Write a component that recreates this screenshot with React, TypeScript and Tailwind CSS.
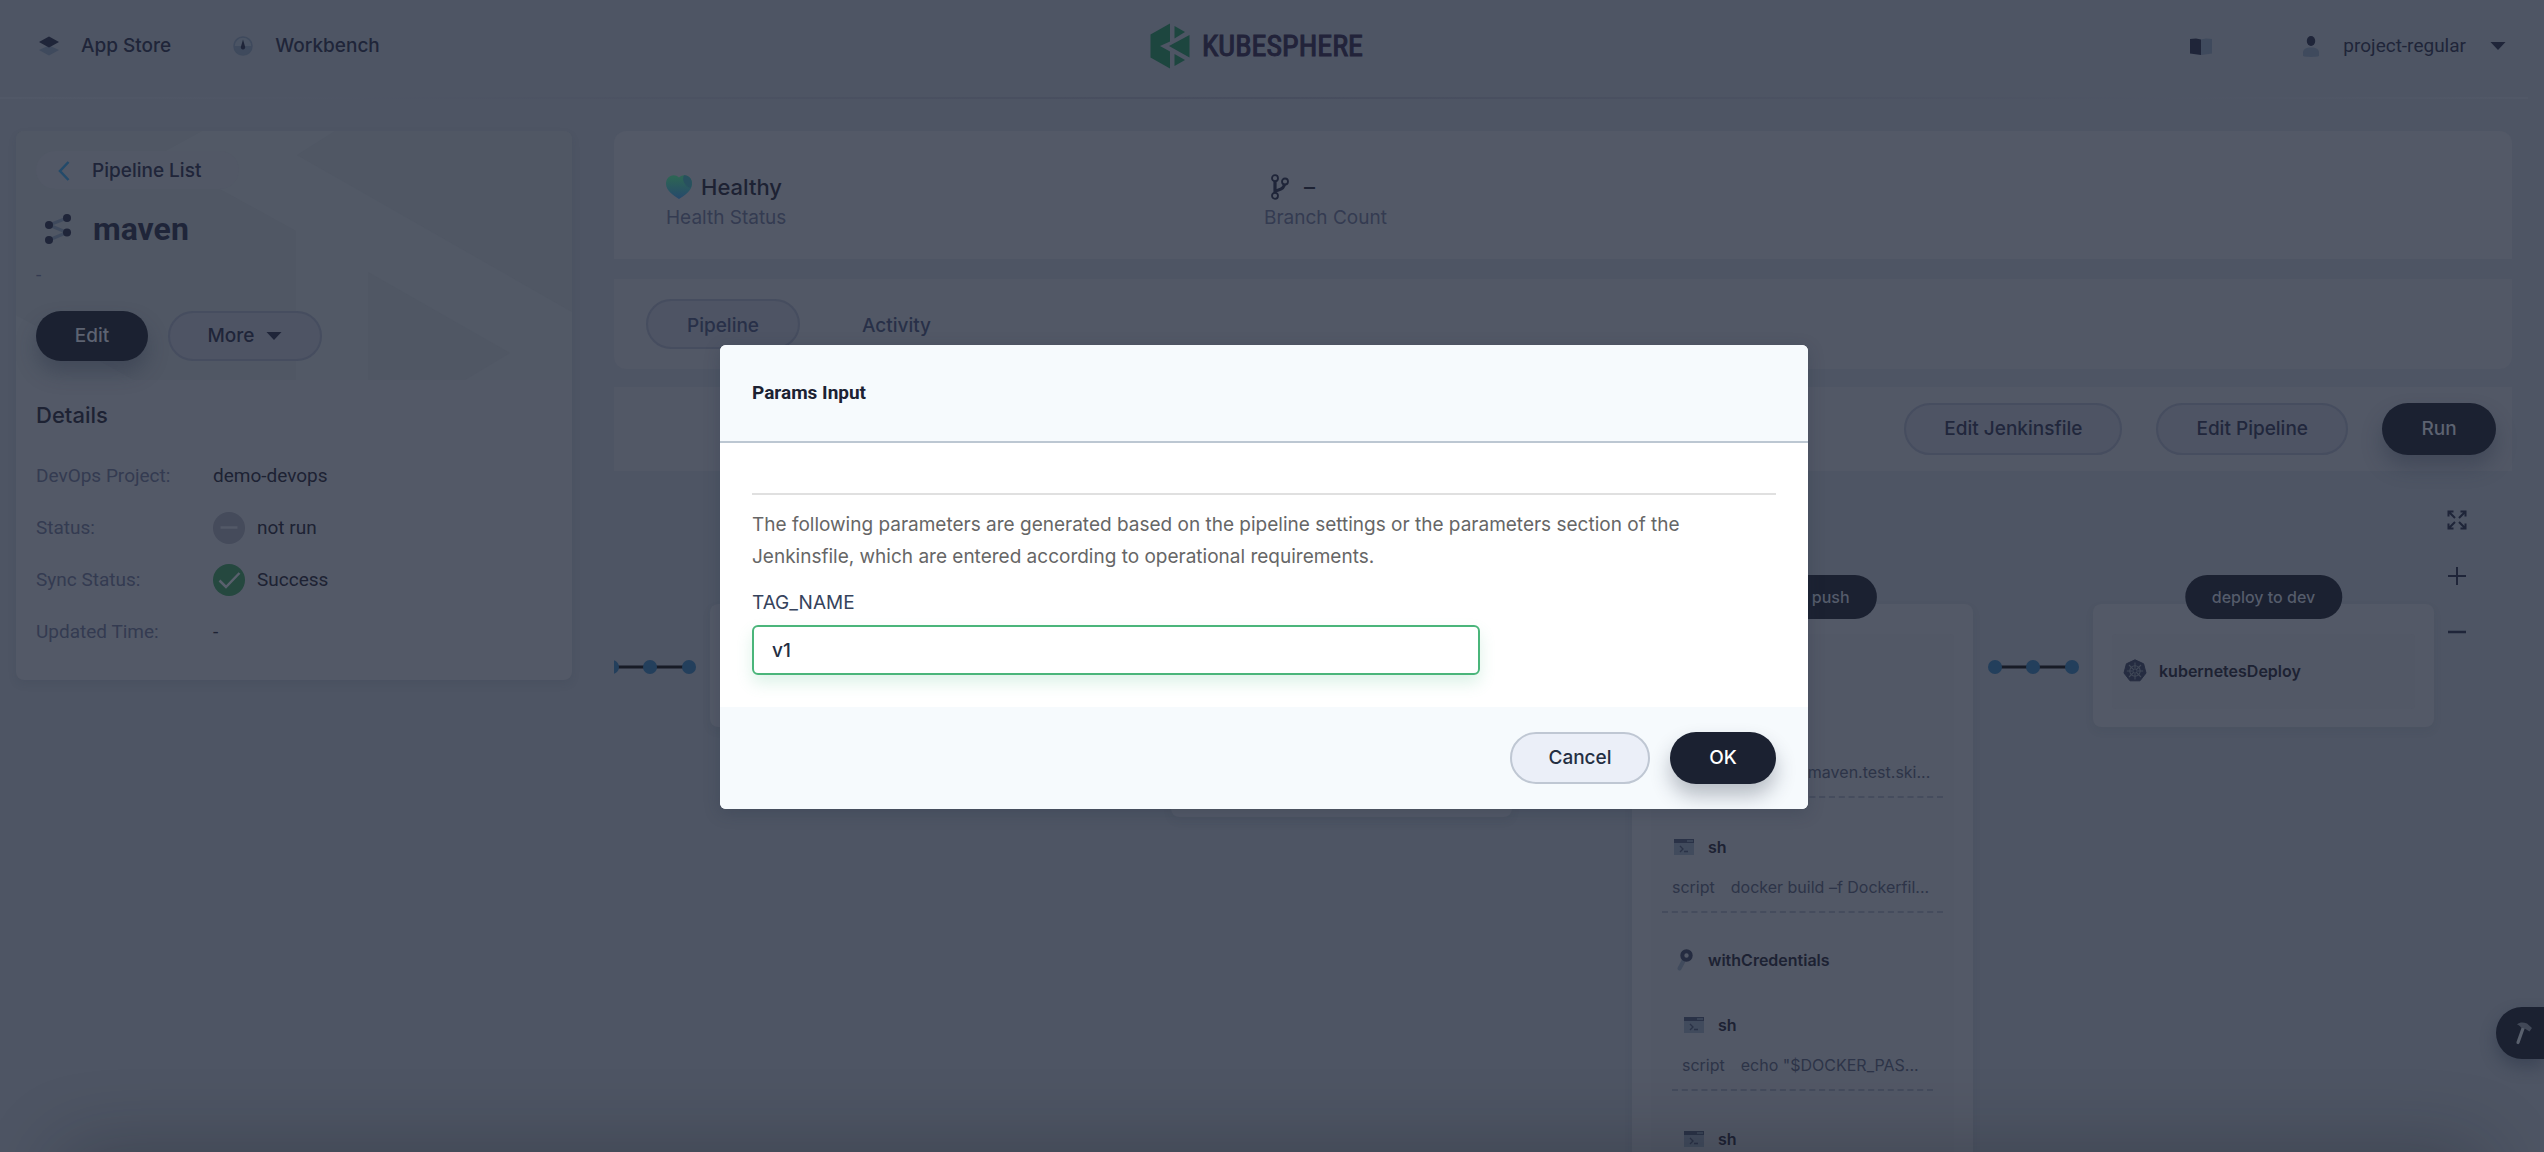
import React from "react";

function LayersIcon() {
  return (
    <svg viewBox="0 0 20 20" className="size-5" aria-hidden="true">
      <path d="M10 9.500 L20 14 L10 19.500 L0 14 Z" fill="#3f4a5d" />
      <path d="M10 0.500 L20 6 L10 11.500 L0 6 Z" fill="#1f2539" />
    </svg>
  );
}

function GaugeIcon() {
  return (
    <svg viewBox="0 0 20 20" className="size-5" aria-hidden="true">
      <circle cx="10" cy="10" r="9" fill="#4b5464" stroke="#3f4a5d" strokeWidth="1.500" />
      <path d="M1 10 A9 9 0 0 0 19 10 Z" fill="#3f4a5d" />
      <path d="M10 3.500 L12 10.500 A2.200 2.200 0 1 1 8 10.500 Z" fill="#1f2539" />
    </svg>
  );
}

function BookIcon() {
  return (
    <svg viewBox="0 0 22 17" className="h-[17px] w-[22px]" aria-hidden="true">
      <path d="M0 1 L6 0.500 L11 1.500 L11 17 L0 15.500 Z" fill="#1f2539" />
      <path d="M11 1.500 L16 0.500 L22 1 L22 15.500 L11 17 Z" fill="#3f4a5d" />
    </svg>
  );
}

function UserIcon() {
  return (
    <svg viewBox="0 0 16 21" className="h-[21px] w-4" aria-hidden="true">
      <ellipse cx="8" cy="5" rx="4.200" ry="5" fill="#1f2539" />
      <path d="M0 20 V17 C0 13 3 11.500 8 11.500 C13 11.500 16 13 16 17 V20 C12 21.200 4 21.200 0 20 Z" fill="#3f4a5d" />
    </svg>
  );
}

function Caret() {
  return (
    <svg viewBox="0 0 16 8" className="h-2 w-4" aria-hidden="true">
      <path d="M0.500 0 H15.500 L8 8 Z" fill="#1f2539" />
    </svg>
  );
}

function LogoMark() {
  return (
    <svg viewBox="0 0 40 46" className="h-[46px] w-10" aria-hidden="true">
      <g fill="#1d463f">
        <path d="M20 0.500 V18.500 L10 23 L20 28.500 V45.500 L0.500 34.500 V11.500 Z" />
        <path d="M24.500 3 L35 9 L24.500 15.500 Z" />
        <path d="M24.500 31 L35 37 L24.500 43 Z" />
        <path d="M39.500 12 V34.500 L19 23 Z" />
      </g>
    </svg>
  );
}

function PipelineIcon() {
  return (
    <svg viewBox="0 0 28 32" className="h-8 w-7" aria-hidden="true">
      <path d="M23 5 L5 12 L23 19.500 L5 27" fill="none" stroke="#3f4a5d" strokeWidth="3" />
      <g fill="#1f2539">
        <circle cx="23" cy="5" r="4" />
        <circle cx="5" cy="12" r="4" />
        <circle cx="23" cy="19.500" r="4" />
        <circle cx="5" cy="27" r="4" />
      </g>
    </svg>
  );
}

function HeartIcon() {
  return (
    <svg viewBox="0 0 26 24" className="h-6 w-[26px]" aria-hidden="true">
      <defs>
        <linearGradient id="heart" x1="0" y1="0" x2="0" y2="1">
          <stop offset="0.100" stopColor="#2d6455" />
          <stop offset="0.950" stopColor="#264a6b" />
        </linearGradient>
      </defs>
      <path d="M13 2.500 C10.500 0 7 -0.300 4.500 1 C1 2.800 0 6 0 9 C0 15.500 7 20 13 24 C19 20 26 15.500 26 9 C26 6 25 2.800 21.500 1 C19 -0.300 15.500 0 13 2.500 Z" fill="url(#heart)" />
      <path d="M18 0.300 C16 4 17.500 10 24.500 13 C27 8 26 3 21.500 1 C20.300 0.400 19.200 0.200 18 0.300 Z" fill="#28505f" />
    </svg>
  );
}

function BranchIcon() {
  return (
    <svg viewBox="0 0 20 26" className="h-[26px] w-5" fill="none" stroke="#1f2539" aria-hidden="true">
      <path d="M5 7 V19 M5 18 C6 15 14 17 14.500 10" strokeWidth="3.200" />
      <circle cx="5" cy="4.200" r="3" strokeWidth="1.800" />
      <circle cx="15" cy="7.500" r="3" strokeWidth="1.800" />
      <circle cx="5" cy="21.800" r="3" strokeWidth="1.800" />
    </svg>
  );
}

function TerminalIcon() {
  return (
    <svg viewBox="0 0 24 20" className="h-5 w-6" aria-hidden="true">
      <rect x="2" y="2" width="20" height="16" fill="#414b5d" />
      <rect x="2" y="2" width="20" height="4" fill="#2a3247" />
      <path d="M15 4 H21" stroke="#414b5d" strokeWidth="1.500" />
      <path d="M8 9 L11 12 L8 15 M12 14.500 H16" fill="none" stroke="#2a3247" strokeWidth="1.300" />
    </svg>
  );
}

function KeyIcon() {
  return (
    <svg viewBox="0 0 24 24" className="size-6" fill="none" aria-hidden="true">
      <path d="M12 12 L7.500 20.500" stroke="#414b5d" strokeWidth="4" strokeLinecap="round" />
      <circle cx="14.500" cy="7.500" r="4.200" stroke="#252c41" strokeWidth="4" />
    </svg>
  );
}

function KubernetesIcon() {
  return (
    <svg viewBox="0 0 24 24" className="size-6" aria-hidden="true">
      <path d="M12 0.800 L20.600 4.800 L23 14 L17 21.800 H7 L1 14 L3.400 4.800 Z" fill="#252c41" stroke="#252c41" strokeLinejoin="round" />
      <g fill="none" stroke="#414958" strokeWidth="1.100">
        <circle cx="12" cy="12" r="5.200" />
        <path d="M12 3.500 V20.500 M3.800 12 H20.200 M6 6 L18 18 M18 6 L6 18" />
      </g>
      <circle cx="12" cy="12" r="1.500" fill="#252c41" />
    </svg>
  );
}

function HammerIcon() {
  return (
    <svg viewBox="0 0 22 26" className="h-[26px] w-[22px]" aria-hidden="true">
      <path d="M11.500 7 L6 22.500" stroke="#59606d" strokeWidth="3.200" strokeLinecap="round" />
      <path d="M5 4.500 C8 2 11 2 15 3.500 L20 8 L17.500 11.500 L13.500 9 L9 7.500 C8 6 7 5.200 5 4.500 Z" fill="#414857" />
    </svg>
  );
}

const outlineButton =
  "h-[52px] rounded-full border-2 border-[#464d5f] bg-[#4e5464] px-[38px] font-[Inter,sans-serif] text-[19px] font-medium text-[#21273c]";
const darkButton =
  "rounded-full bg-[#1b2131] font-[Inter,sans-serif] text-[19px] font-medium text-[#5d6371] shadow-[0_12px_20px_rgba(36,46,66,0.35)]";

function Connector() {
  return (
    <svg viewBox="0 0 120 16" className="mt-[55px] h-4 w-[120px] shrink-0" aria-hidden="true">
      <path d="M22 8 H98" stroke="#171b26" strokeWidth="3" />
      <g fill="#233f5c">
        <circle cx="22" cy="8" r="7" />
        <circle cx="60" cy="8" r="7" />
        <circle cx="99" cy="8" r="7" />
      </g>
    </svg>
  );
}

function Step({ icon, name }: { icon: React.ReactNode; name: string }) {
  return (
    <div className="flex h-6 items-center gap-3 text-base font-semibold text-[#1d2233]">
      <span className="flex w-6 justify-center">{icon}</span>
      {name}
    </div>
  );
}

function ShellStep({ value }: { value: string }) {
  return (
    <div className="flex flex-col gap-4 border-b-2 border-dashed border-[#454c5d] px-2.5 pt-[37px] pb-3">
      <Step icon={<TerminalIcon />} name="sh" />
      <div className="flex h-6 items-center gap-4 text-base whitespace-nowrap text-[#2d3448]">
        <span>script</span>
        <span>{value}</span>
      </div>
    </div>
  );
}

function Stage({ name, children }: { name?: string; children?: React.ReactNode }) {
  return (
    <section className="relative w-[341px] shrink-0 rounded-lg bg-[#535967] px-[19px] pt-[30px] pb-[18px] font-[Inter,sans-serif] shadow-[0_4px_8px_rgba(36,46,66,0.08)]">
      {name && (
        <h3 className="absolute -top-[29px] left-1/2 flex h-[44px] -translate-x-1/2 items-center rounded-full bg-[#1b2131] px-[27px] text-base font-medium whitespace-nowrap text-[#555c6b]">
          {name}
        </h3>
      )}
      <div className="min-h-[75px] rounded-sm bg-[#525866] px-[11px] pt-[25px]">{children}</div>
    </section>
  );
}

function DetailRow({ label, children }: { label: string; children: React.ReactNode }) {
  return (
    <div className="flex h-[52px] items-center">
      <dt className="w-[177px] text-[#343b51]">{label}</dt>
      <dd className="flex items-center gap-3 text-[#1d2233]">{children}</dd>
    </div>
  );
}

function ParamsDialog() {
  return (
    <div className="absolute inset-0 flex items-start justify-center pt-[345px] pr-4">
      <form
        role="dialog"
        aria-label="Params Input"
        className="w-[1088px] max-w-full overflow-hidden rounded-md bg-white font-[Inter,sans-serif] text-[19px] shadow-[0_4px_16px_rgba(36,46,66,0.25)]"
        onSubmit={(e) => e.preventDefault()}
      >
        <header className="flex h-[98px] items-center border-b-2 border-[#bcc7d2] bg-[#f6fafd] px-8">
          <h2 className="font-[Roboto,sans-serif] font-bold text-[#1c2233]">Params Input</h2>
        </header>
        <div className="px-8 pt-[50px] pb-8">
          <hr className="border-t-2 border-[#e0e0e0]" />
          <p className="max-w-[960px] pt-[14px] leading-8 text-[#666]">
            The following parameters are generated based on the pipeline settings or the parameters section of the
            Jenkinsfile, which are entered according to operational requirements.
          </p>
          <label htmlFor="tag-name" className="mt-3.5 block leading-8 text-[#36435c]">
            TAG_NAME
          </label>
          <input
            id="tag-name"
            defaultValue="v1"
            className="mt-1.5 block h-[50px] w-[728px] max-w-full rounded-md border-2 border-[#4ab57a] px-[18px] font-medium text-[#242e42] shadow-[0_8px_16px_rgba(85,188,138,0.2)] outline-none"
          />
        </div>
        <footer className="flex h-[102px] items-center justify-end gap-5 bg-[#f6fafd] px-8 font-medium">
          <button type="button" className="h-[52px] w-[140px] rounded-full border-2 border-[#bfc7d3] bg-[#ebeff8] text-[#242e42]">
            Cancel
          </button>
          <button type="submit" className="h-[52px] w-[106px] rounded-full bg-[#1b2131] text-white shadow-[0_12px_20px_rgba(36,46,66,0.3)]">
            OK
          </button>
        </footer>
      </form>
    </div>
  );
}

export default function App() {
  return (
    <div className="relative flex h-screen flex-col overflow-hidden bg-[#4e5564] pr-4 font-[Roboto,sans-serif] text-[19px] text-[#1f2539]">
      <header className="grid h-[97px] shrink-0 grid-cols-[1fr_auto_1fr] items-center pr-[22px] pb-[5px] pl-[39px]">
        <nav className="flex items-center gap-[62px] font-[Inter,sans-serif] font-medium">
          <a href="#apps" className="flex items-center gap-[22px]">
            <LayersIcon />
            App Store
          </a>
          <a href="#workbench" className="flex items-center gap-[22px]">
            <GaugeIcon />
            Workbench
          </a>
        </nav>
        <a href="#home" className="flex items-center gap-3 pr-8" aria-label="KubeSphere">
          <LogoMark />
          <span className="font-['Liberation_Sans_Narrow','Roboto_Condensed',sans-serif] text-[30px] leading-none text-[#22233a] [-webkit-text-stroke:1px_#22233a]">
            KUBESPHERE
          </span>
        </a>
        <div className="flex items-center justify-end">
          <a href="#docs" aria-label="Documentation" className="mr-[91px]">
            <BookIcon />
          </a>
          <button type="button" className="flex items-center gap-6">
            <UserIcon />
            project-regular
            <Caret />
          </button>
        </div>
      </header>
      <div className="h-0.5 shrink-0 bg-linear-to-r from-[#515867] via-[#474d5e] to-[#515867]" />

      <div className="flex min-h-0 flex-1 gap-[42px] pt-8 pr-4 pl-4">
        <aside className="w-[556px] shrink-0 self-start overflow-hidden rounded-lg bg-[#535967] shadow-[0_4px_8px_rgba(36,46,66,0.1)]">
          <div className="relative h-[249px] bg-[#525966] px-5 pt-5">
            <svg viewBox="0 0 556 249" className="absolute inset-0 size-full" preserveAspectRatio="xMinYMin slice" aria-hidden="true">
              <g fill="#505764">
                <path d="M0 0 H186 L142 24 L280 100 V249 H118 L0 184 Z" />
                <path d="M319 0 H556 V181 L281 24 Z" />
                <path d="M352 141 L494 222 L449 249 H352 Z" />
              </g>
            </svg>
            <div className="relative">
              <a
                href="#pipelines"
                className="flex h-[38px] w-[203px] items-center gap-[22px] rounded-full bg-[#525866] pt-0.5 pl-[22px] font-[Inter,sans-serif] font-medium"
              >
                <svg viewBox="0 0 12 20" className="h-5 w-3" fill="none" stroke="#234a6a" strokeWidth="2.500" aria-hidden="true">
                  <path d="M10.500 1 L2 10 L10.500 19" />
                </svg>
                Pipeline List
              </a>
              <div className="mt-[22px] flex items-center gap-[21px] pl-2">
                <PipelineIcon />
                <h1 className="text-[32px] leading-9 font-bold">maven</h1>
              </div>
              <p className="mt-4 leading-6 text-[#343b51]">-</p>
              <div className="mt-6 flex gap-5">
                <button type="button" className={darkButton + " h-[50px] w-[112px]"}>
                  Edit
                </button>
                <button
                  type="button"
                  className="flex h-[50px] w-[154px] items-center justify-center gap-3 rounded-full border-2 border-[#464d5f] bg-[#4e5464] font-[Inter,sans-serif] font-medium"
                >
                  More
                  <Caret />
                </button>
              </div>
            </div>
          </div>
          <div className="px-5 pt-5 pb-[22px]">
            <h2 className="font-[Inter,sans-serif] text-[22px] leading-[30px] font-medium text-[#1d2233]">Details</h2>
            <dl className="mt-5">
              <DetailRow label="DevOps Project:">demo-devops</DetailRow>
              <DetailRow label="Status:">
                <svg viewBox="0 0 32 32" className="size-8" aria-hidden="true">
                  <circle cx="16" cy="16" r="16" fill="#454b5b" />
                  <path d="M7.500 15.500 H24.500" stroke="#535967" strokeWidth="2.500" />
                </svg>
                not run
              </DetailRow>
              <DetailRow label="Sync Status:">
                <svg viewBox="0 0 32 32" className="size-8" aria-hidden="true">
                  <circle cx="16" cy="16" r="16" fill="#25483f" />
                  <path d="M6.500 16.500 L13 23 L26.500 9" fill="none" stroke="#59606d" strokeWidth="2.500" />
                </svg>
                Success
              </DetailRow>
              <DetailRow label="Updated Time:">-</DetailRow>
            </dl>
          </div>
        </aside>

        <main className="flex min-w-0 flex-1 flex-col font-[Inter,sans-serif]">
          <section className="grid h-32 shrink-0 grid-cols-[598px_1fr] items-center rounded-t-xl bg-[#535967] pt-3.5 pl-[52px]">
            <div>
              <p className="flex h-8 items-center gap-[9px] text-[22px] font-medium text-[#1d2233]">
                <HeartIcon />
                Healthy
              </p>
              <p className="leading-[30px] text-[#343b51]">Health Status</p>
            </div>
            <div>
              <p className="flex h-8 items-center gap-3.5 pl-1.5 text-[22px] font-medium text-[#1d2233]">
                <BranchIcon />–
              </p>
              <p className="leading-[30px] text-[#343b51]">Branch Count</p>
            </div>
          </section>

          <nav className="mt-5 flex h-[90px] shrink-0 items-start rounded-b-xl bg-[#525866] px-8 pt-5 font-medium text-[#283048]">
            <a href="#pipeline" className="flex h-[50px] w-[154px] items-center justify-center rounded-full border-2 border-[#464d5f] bg-[#4e5464] pt-1">
              Pipeline
            </a>
            <a href="#activity" className="ml-[62px] flex h-[50px] items-center pt-1">
              Activity
            </a>
          </nav>

          <section className="mt-[18px] flex h-[84px] shrink-0 items-center justify-end bg-[#525866] px-4">
            <button type="button" className={outlineButton}>
              Edit Jenkinsfile
            </button>
            <button type="button" className={outlineButton + " ml-[34px]"}>
              Edit Pipeline
            </button>
            <button type="button" className={darkButton + " ml-[34px] h-[52px] w-[114px]"}>
              Run
            </button>
          </section>

          <section className="relative min-h-0 flex-1 overflow-hidden pt-[133px]">
            <div className="-ml-6 flex items-start">
              <Connector />
              <Stage />
              <Connector />
              <Stage>
                <div className="h-[140px]" />
              </Stage>
              <Connector />
              <Stage name="build & push">
                <Step icon={<KubernetesIcon />} name="container" />
                <ShellStep value="mvn -o -Dmaven.test.ski..." />
                <ShellStep value="docker build –f Dockerfil..." />
                <div className="px-2.5 pt-[35px] pb-10">
                  <div className="mb-1">
                    <Step icon={<KeyIcon />} name="withCredentials" />
                  </div>
                  <ShellStep value={'echo "$DOCKER_PAS...'} />
                  <div className="px-2.5 pt-9">
                    <Step icon={<TerminalIcon />} name="sh" />
                  </div>
                </div>
              </Stage>
              <Connector />
              <Stage name="deploy to dev">
                <Step icon={<KubernetesIcon />} name="kubernetesDeploy" />
              </Stage>
            </div>
            <div className="absolute top-[39px] right-[45px] flex flex-col gap-9">
              <button type="button" aria-label="Full screen">
                <svg viewBox="0 0 20 20" className="size-5" fill="none" stroke="#1f2539" strokeWidth="2" aria-hidden="true">
                  <path d="M1.500 6.500 V1.500 H6.500 M1.500 1.500 L8 8 M13.500 1.500 H18.500 V6.500 M18.500 1.500 L12 8 M18.500 13.500 V18.500 H13.500 M18.500 18.500 L12 12 M6.500 18.500 H1.500 V13.500 M1.500 18.500 L8 12" />
                </svg>
              </button>
              <button type="button" aria-label="Zoom in">
                <svg viewBox="0 0 20 20" className="size-5" stroke="#1f2539" strokeWidth="2" aria-hidden="true">
                  <path d="M1 10 H19 M10 1 V19" />
                </svg>
              </button>
              <button type="button" aria-label="Zoom out">
                <svg viewBox="0 0 20 20" className="size-5" stroke="#1f2539" strokeWidth="2.500" aria-hidden="true">
                  <path d="M1 10 H19" />
                </svg>
              </button>
            </div>
          </section>
        </main>
      </div>

      <button
        type="button"
        aria-label="Toolbox"
        className="absolute right-0 bottom-[93px] flex h-[52px] w-12 items-center rounded-l-full bg-[#1b2131] pl-4 shadow-[0_8px_16px_rgba(36,46,66,0.4)]"
      >
        <HammerIcon />
      </button>
      <div className="absolute inset-x-16 top-full h-24 shadow-[0_0_80px_rgba(20,24,30,0.3)]" />
      <ParamsDialog />
    </div>
  );
}
